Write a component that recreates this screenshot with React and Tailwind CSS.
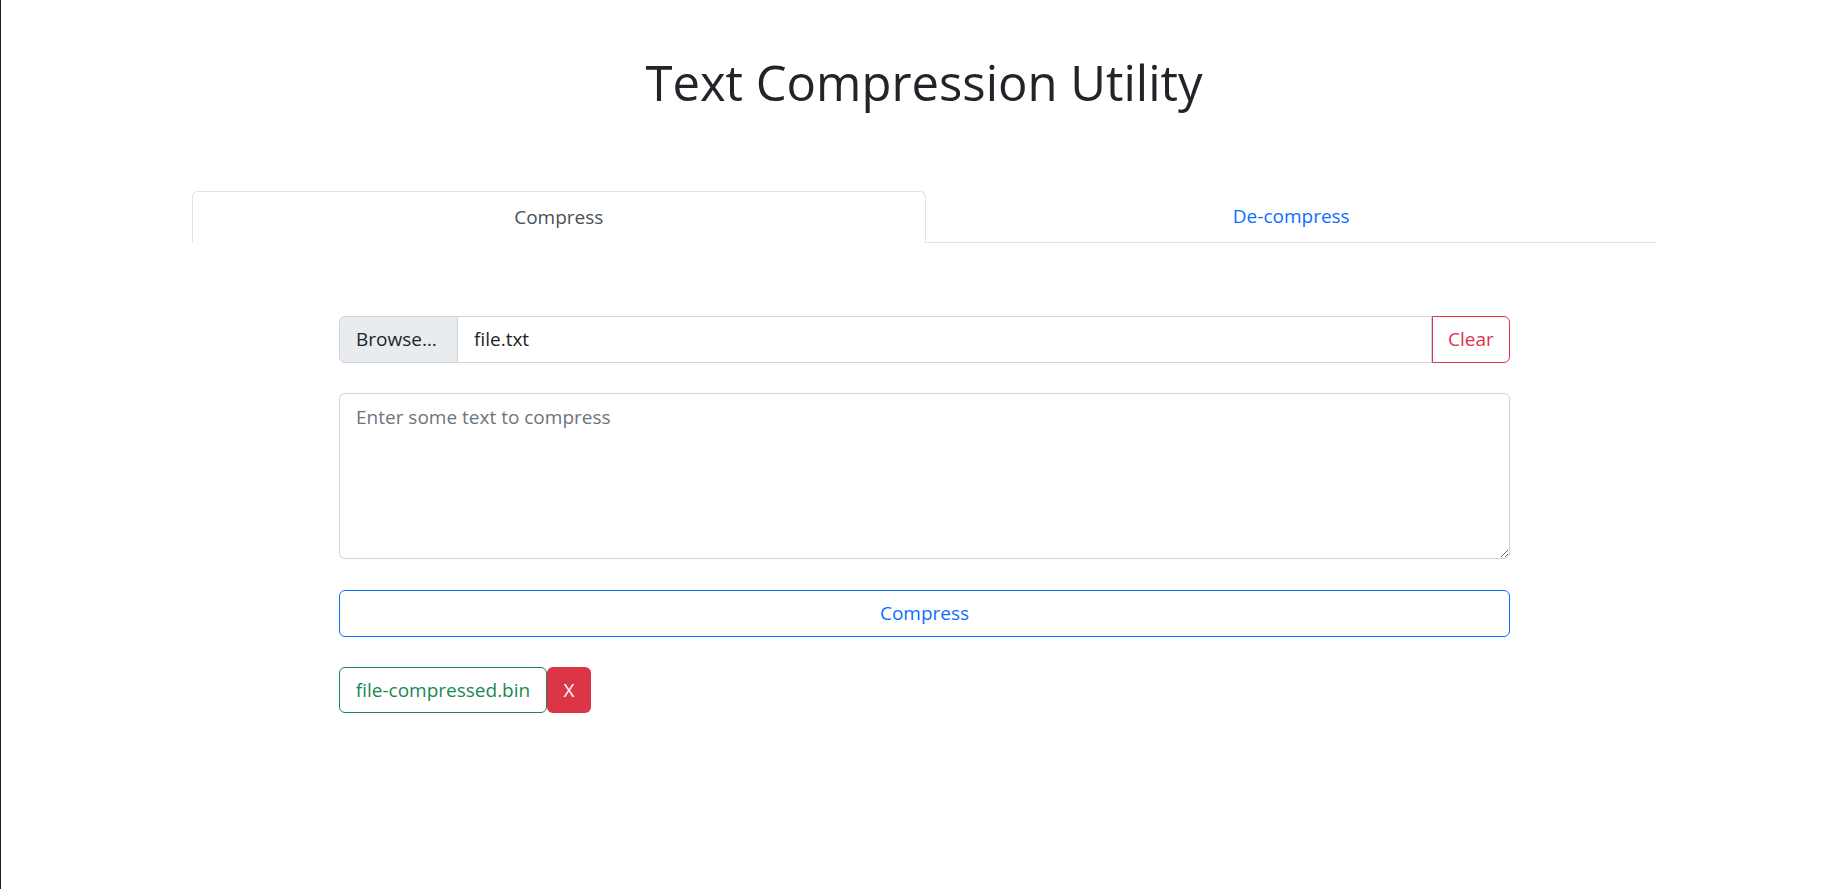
import React from "react";

export default function App() {
  return (
    <div
      className="min-h-[889px] w-full border-l border-[#1e1e1e] bg-white text-[#212529]"
      style={{ fontFamily: '"Open Sans", "Noto Sans", sans-serif' }}
    >
      <h1 className="pl-px pt-[52px] text-center text-[49px] leading-[60px] font-normal">
        Text Compression Utility
      </h1>

      <div className="ml-[191px] mt-[79px] w-[1465px]">
        <div className="flex border-b border-[#dee2e6]">
          <button className="-mb-px flex h-[52px] flex-1 items-center justify-center rounded-t-[6px] border border-[#dee2e6] border-b-white bg-white text-[19px] text-[#495057]">
            Compress
          </button>
          <button className="flex h-[51px] flex-1 items-center justify-center text-[19px] text-[#0d6efd]">
            De-compress
          </button>
        </div>

        <div className="mx-auto mt-[73px] w-[1171px]">
          <div className="flex h-[47px] text-[19px]">
            <div className="flex w-[119px] items-center rounded-l-[6px] border border-[#ced4da] bg-[#e9ecef] px-4 text-[#212529]">
              Browse…
            </div>
            <div className="flex flex-1 items-center border-y border-r border-[#ced4da] px-4 text-[#212529]">
              file.txt
            </div>
            <button className="flex w-[78px] items-center justify-center rounded-r-[6px] border border-[#dc3545] text-[#dc3545]">
              Clear
            </button>
          </div>

          <textarea
            className="mt-[30px] block h-[166px] w-full resize-y rounded-[6px] border border-[#ced4da] px-4 py-2 text-[19px] leading-[30px] text-[#212529] outline-none placeholder:text-[#6c757d]"
            placeholder="Enter some text to compress"
          />

          <button className="mt-[31px] flex h-[47px] w-full items-center justify-center rounded-[6px] border border-[#0d6efd] text-[19px] text-[#0d6efd]">
            Compress
          </button>

          <div className="mt-[30px] flex h-[46px] text-[19px]">
            <button className="flex w-[208px] items-center justify-center rounded-[6px] border border-[#198754] text-[#198754]">
              file-compressed.bin
            </button>
            <button className="flex w-[44px] items-center justify-center rounded-[6px] bg-[#dc3545] text-white">
              X
            </button>
          </div>
        </div>
      </div>
    </div>
  );
}
